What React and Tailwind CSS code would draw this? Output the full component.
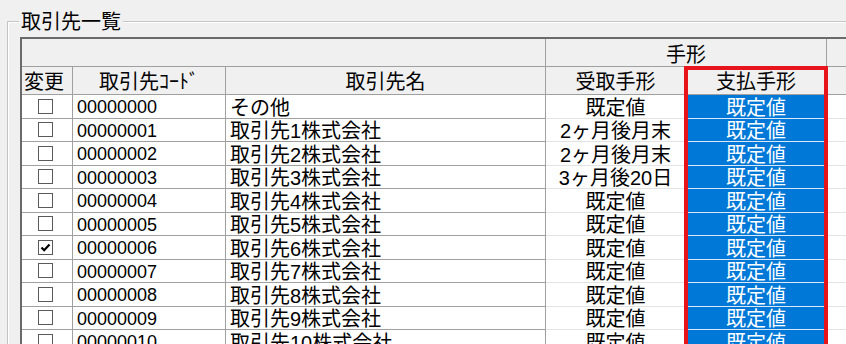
import React from 'react';

const FONT = { fontFamily: '"Liberation Sans", "Noto Sans CJK JP", sans-serif' };

const partners = [
  { code: '00000000', name: 'その他', recv: '既定値', pay: '既定値', checked: false },
  { code: '00000001', name: '取引先1株式会社', recv: '2ヶ月後月末', pay: '既定値', checked: false },
  { code: '00000002', name: '取引先2株式会社', recv: '2ヶ月後月末', pay: '既定値', checked: false },
  { code: '00000003', name: '取引先3株式会社', recv: '3ヶ月後20日', pay: '既定値', checked: false },
  { code: '00000004', name: '取引先4株式会社', recv: '既定値', pay: '既定値', checked: false },
  { code: '00000005', name: '取引先5株式会社', recv: '既定値', pay: '既定値', checked: false },
  { code: '00000006', name: '取引先6株式会社', recv: '既定値', pay: '既定値', checked: true },
  { code: '00000007', name: '取引先7株式会社', recv: '既定値', pay: '既定値', checked: false },
  { code: '00000008', name: '取引先8株式会社', recv: '既定値', pay: '既定値', checked: false },
  { code: '00000009', name: '取引先9株式会社', recv: '既定値', pay: '既定値', checked: false },
  { code: '00000010', name: '取引先10株式会社', recv: '既定値', pay: '既定値', checked: false },
];

function CheckBox({ checked }) {
  return (
    <div className="w-[15px] h-[15px] border border-[#5a5a5a] bg-white flex items-center justify-center">
      {checked && (
        <svg width="11" height="11" viewBox="0 0 11 11">
          <path d="M1.5 5.5 L4.2 8.2 L9.5 2.5" fill="none" stroke="#000" strokeWidth="2.2" />
        </svg>
      )}
    </div>
  );
}

function Row({ row }) {
  return (
    <div className="flex h-[23.5px] text-[20px] leading-none text-black">
      <div className="w-[51px] shrink-0 bg-white border-r border-b border-[#a0a0a0] flex items-center justify-center pr-[3px]">
        <CheckBox checked={row.checked} />
      </div>
      <div className="w-[153px] shrink-0 bg-white border-r border-b border-[#a0a0a0] flex items-center pl-[4px] pt-[2px] text-[18px]">
        {row.code}
      </div>
      <div className="w-[320px] shrink-0 bg-white border-r border-b border-[#a0a0a0] flex items-center pl-[4px] pt-[3px]">
        {row.name}
      </div>
      <div className="w-[140px] shrink-0 bg-white border-r border-b border-r-[#a0a0a0] border-b-[#e3e3e3] flex items-center justify-center pt-[3px]">
        {row.recv}
      </div>
      <div className="w-[141px] shrink-0 bg-[#0078d7] text-white border-r border-b border-r-[#a0a0a0] border-b-[#dbe9f7] flex items-center justify-center pt-[3px]">
        {row.pay}
      </div>
      <div className="flex-1 bg-white border-b border-[#e3e3e3]" />
    </div>
  );
}

export default function App() {
  return (
    <div className="w-[846px] h-[344px] overflow-hidden bg-[#f0f0f0]" style={FONT}>
      {/* group box */}
      <div className="relative mt-[21px] ml-[7px] h-[400px] border-l border-t border-[#c4c4c4] shadow-[inset_1px_1px_0_#ffffff]">
        <div className="absolute -top-[11px] left-[11px] px-[2px] bg-[#f0f0f0] text-[20px] leading-[22px] text-black">
          取引先一覧
        </div>

        <div className="relative ml-[12px] mt-[15px] border-l-2 border-t-2 border-[#6a6a6a]">
          {/* header row 1 */}
          <div className="flex h-[28px] text-[20px] leading-none text-black">
            <div className="w-[524px] shrink-0 border-r border-b border-[#a0a0a0]" />
            <div className="w-[281px] shrink-0 border-r border-b border-[#a0a0a0] flex items-center justify-center pt-[4px]">
              手形
            </div>
            <div className="flex-1 border-b border-[#a0a0a0]" />
          </div>
          {/* header row 2 */}
          <div className="flex h-[28px] text-[20px] leading-none text-black">
            <div className="w-[51px] shrink-0 border-r border-b border-[#a0a0a0] flex items-center pl-[2px] pt-[3px]">
              変更
            </div>
            <div className="w-[153px] shrink-0 border-r border-b border-[#a0a0a0] flex items-center justify-center pt-[3px]">
              取引先ｺｰﾄﾞ
            </div>
            <div className="w-[320px] shrink-0 border-r border-b border-[#a0a0a0] flex items-center justify-center pt-[3px]">
              取引先名
            </div>
            <div className="w-[140px] shrink-0 border-r border-b border-[#a0a0a0] flex items-center justify-center pt-[3px]">
              受取手形
            </div>
            <div className="w-[141px] shrink-0 border-r border-b border-[#a0a0a0] flex items-center justify-center pt-[3px]">
              支払手形
            </div>
            <div className="flex-1 border-b border-[#a0a0a0]" />
          </div>

          {partners.map((row) => (
            <Row key={row.code} row={row} />
          ))}

          {/* highlight around the payment column */}
          <div className="absolute left-[662px] top-[27px] w-[144px] h-[400px] border-4 border-[#e8141c] pointer-events-none" />
        </div>
      </div>
    </div>
  );
}
